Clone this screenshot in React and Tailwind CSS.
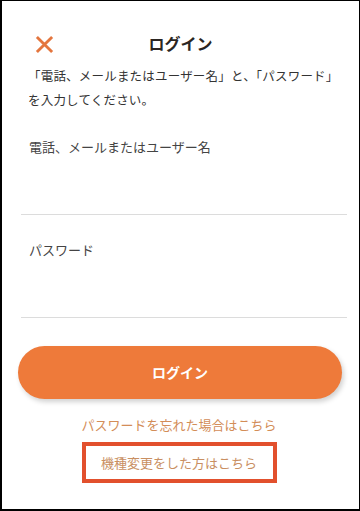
export default function App() {
  return (
    <div
      className="w-[360px] h-[511px] bg-white border-l-2 border-t border-r border-b-2 border-black overflow-hidden flex flex-col"
      style={{ fontFamily: '"Noto Sans CJK JP", "Noto Sans", sans-serif' }}
    >
      {/* Header */}
      <div className="relative flex items-center justify-center h-[20px] mt-[32px]">
        <button className="absolute left-[33px] top-[2px] text-[#e4763e]">
          <svg width="19" height="19" viewBox="0 0 20 20">
            <path d="M2 2 L18 18 M18 2 L2 18" stroke="currentColor" strokeWidth="3" strokeLinecap="butt" />
          </svg>
        </button>
        <h1 className="text-[16px] font-bold text-[#2a2522] leading-none">ログイン</h1>
      </div>

      <p className="mt-[11px] px-[26px] text-[12.5px] leading-[24px] text-[#333] tracking-[0.2px]">
        「電話、メールまたはユーザー名」と、「パスワード」を入力してください。
      </p>

      {/* Fields */}
      <div className="mt-[23px] ml-[19px] mr-[12px] border-b border-[#dcdcdc] h-[80px] pt-[2px]">
        <label className="block pl-[8px] text-[13px] text-[#444]">電話、メールまたはユーザー名</label>
      </div>
      <div className="ml-[19px] mr-[12px] border-b border-[#dcdcdc] h-[103px] pt-[25px]">
        <label className="block pl-[8px] text-[13px] text-[#444]">パスワード</label>
      </div>

      {/* Button */}
      <div className="pl-[16px] pr-[17px] mt-[28px]">
        <button className="w-full h-[53px] rounded-full bg-[#ee7a3a] text-white font-bold text-[14px] shadow-[2px_3px_5px_rgba(0,0,0,0.18)]">
          ログイン
        </button>
      </div>

      <div className="flex flex-col items-center mt-[16px] pr-[3px]">
        <a className="text-[13px] text-[#d38d58] leading-[20px]">パスワードを忘れた場合はこちら</a>
        <div className="mt-[7px] w-[195px] h-[41px] border-[4px] border-[#e2502d] flex items-center justify-center">
          <a className="text-[13px] text-[#c98f62]">機種変更をした方はこちら</a>
        </div>
      </div>
    </div>
  );
}
